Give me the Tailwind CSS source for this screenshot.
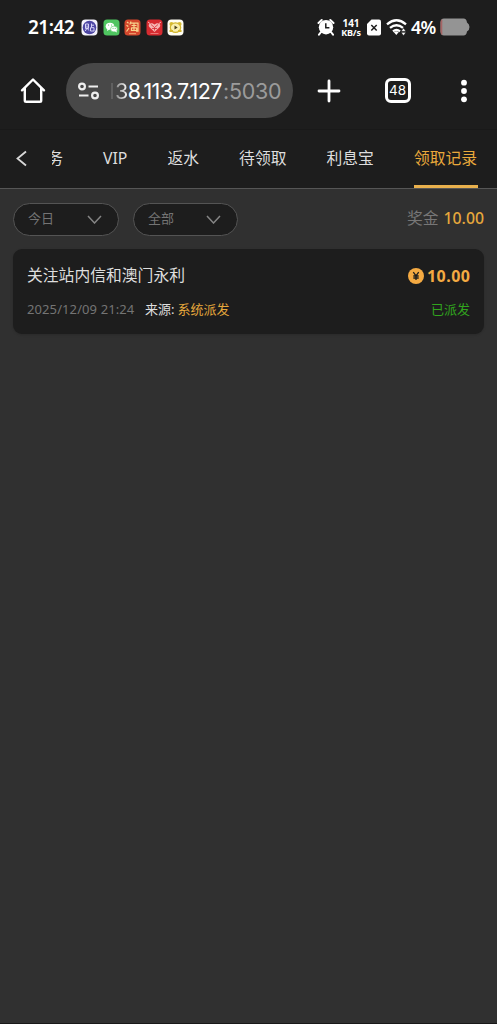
<!DOCTYPE html>
<html lang="zh-CN">
<head>
<meta charset="utf-8">
<meta name="viewport" content="width=device-width, initial-scale=1">
<title>领取记录</title>
<script src="https://cdn.jsdelivr.net/npm/@tailwindcss/browser@4"></script>
</head>
<body class="bg-[#303030] font-['Noto_Sans','Noto_Sans_CJK_SC',sans-serif] text-white">
<div class="flex h-[1024px] w-[497px] flex-col overflow-hidden border-b border-[#181818]">
  <!-- Status bar -->
  <div class="flex h-[54px] items-center bg-[#1d1d1d] pl-7 whitespace-nowrap">
    <span class="w-[53px] shrink-0 text-[19px] leading-none font-semibold tracking-[-0.5px]">21:42</span>
    <div class="flex w-[105px] shrink-0 gap-[4.500px]">
      <svg class="size-[17px] shrink-0" viewBox="0 0 17 17"><rect x=".5" y=".5" width="16" height="16" rx="4" fill="#f4f2fb"/><circle cx="8.5" cy="8.5" r="6.8" fill="#4d46a3"/><path d="M4.500 5h3v4.500h-3zM6 6.500v2.500L4.300 12m2.200-2.500 1.300 2M10.500 4.500v4M10.500 6.200h2.500M9.500 8.700h3.500v3.300H9.500z" fill="none" stroke="#d6d2f5" stroke-width="1"/></svg>
      <svg class="size-[17px] shrink-0" viewBox="0 0 17 17"><rect x=".5" y=".5" width="16" height="16" rx="3.500" fill="#4fc560"/><ellipse cx="7" cy="7.200" rx="4.300" ry="3.500" fill="#fff"/><path d="M4.500 9.500 4 12l2.500-1.500z" fill="#fff"/><ellipse cx="11" cy="10" rx="3.500" ry="2.900" fill="#fff" stroke="#4fc560" stroke-width=".6"/><path d="m12 12.500 1.800 1-.3-2z" fill="#fff"/><path d="M5.500 6h.1M8.500 6h.1M10 9.300h.1M12.200 9.300h.1" stroke="#4fc560" stroke-width="1.100" stroke-linecap="round"/></svg>
      <svg class="size-[17px] shrink-0" viewBox="0 0 17 17"><rect x=".5" y=".5" width="16" height="16" rx="3.500" fill="#d4472c"/><path d="m3 3 1.500 1.300M2.500 6.300 4.300 7.500M2.500 12.500 5 9M7 2.500 5.800 5.500M6.500 4.200h7.500v8h-2M7.500 6.500h5M10 4.500v6.500M7.200 8.800h5.600M7.500 8.800v2.700h5.200V9" fill="none" stroke="#f8d48c" stroke-width="1.200"/><path d="M5 14.700h7" stroke="#f0aa75" stroke-width="1"/></svg>
      <svg class="size-[17px] shrink-0" viewBox="0 0 17 17"><rect x=".5" y=".5" width="16" height="16" rx="3.500" fill="#d72b30"/><path d="M8.500 13 3.300 8c-2-3 1.700-5.500 5.200-2.500C12 2.500 15.700 5 13.700 8z" fill="#f6b5b2"/><path d="m5 5.500 3.500 3 3.500-3M6 9.500h5M8.500 8.500v3M2.500 3.300l1.800 1m10.200-1-1.800 1" fill="none" stroke="#d72b30" stroke-width=".8"/><path d="M2 3l2 1.500M15 3l-2 1.500" stroke="#f6b5b2" stroke-width="1"/><path d="M4.500 14.500h8" stroke="#f08a86" stroke-width=".8"/></svg>
      <svg class="size-[17px] shrink-0" viewBox="0 0 17 17"><rect x=".5" y=".5" width="16" height="16" rx="4" fill="#fffdf2"/><circle cx="4.500" cy="5" r="2.100" fill="#d6bb32"/><circle cx="12.500" cy="5" r="2.100" fill="#d6bb32"/><ellipse cx="8.500" cy="8.600" rx="5.200" ry="4.800" fill="#f9efac" stroke="#d2b52d" stroke-width="1.200"/><path d="M2.500 12h3.500m5 0h3.500" stroke="#d2b52d" stroke-width="2"/><path d="m7.500 6.500 3.200 2-3.200 2z" fill="#4c431d"/></svg>
    </div>
    <svg class="ml-[131px] h-[18px] w-[18px] shrink-0" viewBox="0 0 18 18"><circle cx="9" cy="9.200" r="7.200" fill="#fff"/><path d="M1.500 5 4.700 2M16.500 5 13.300 2M4 14l-2 2.600M14 14l2 2.600" stroke="#fff" stroke-width="2" stroke-linecap="round"/><path d="M8.800 5.300v4.400h3.600" fill="none" stroke="#1d1d1d" stroke-width="1.500"/></svg>
    <div class="ml-[5px] flex w-[22px] shrink-0 flex-col items-center font-bold"><span class="text-[10px] leading-[10px]">141</span><span class="text-[9px] leading-[9px] tracking-[-0.200px]">KB/s</span></div>
    <svg class="ml-[5px] h-[17px] w-[14px] shrink-0" viewBox="0 0 14 17"><path d="M4.500.5H12a2 2 0 0 1 2 2v12a2 2 0 0 1-2 2H2a2 2 0 0 1-2-2V5z" fill="#fff"/><path d="m4.300 6 5.400 5.500m0-5.500-5.400 5.500" stroke="#1d1d1d" stroke-width="1.500"/></svg>
    <svg class="ml-[5px] h-[18px] w-[21px] shrink-0" viewBox="0 0 21 18"><path d="M1 6.300Q10.500-1.800 20 6.300M4 9.900q6.500-5.400 13 0M7 13.300q3.500-2.800 7 0" fill="none" stroke="#fff" stroke-width="2.300"/><path d="m7.700 14 2.600 3 2.500-3q-2.500-1.500-5.100 0z" fill="#fff"/><path d="m15.300 13.300 2.200-3 2.200 3zm0 1.200 2.200 3 2.200-3z" fill="#fff" stroke="#1d1d1d" stroke-width=".3"/></svg>
    <span class="ml-[4px] w-[25px] shrink-0 text-[18px] leading-none font-semibold tracking-[-0.700px]">4%</span>
    <svg class="ml-[4px] h-[18px] w-[30px] shrink-0" viewBox="0 0 30 18"><path d="M4 .5h19.500q3 0 3.500 4Q29.500 6 29.500 9T27 13.500q-.5 4-3.500 4H4q-3.500 0-3.500-4v-9Q.5.500 4 .5z" fill="#949494"/><path d="M2.300 1Q.5 2 .5 4.500v9Q.5 16 2.300 17z" fill="#a66565"/></svg>
  </div>
  <!-- Browser toolbar -->
  <div class="flex h-[76px] items-center border-b border-[#191919] bg-[#1d1d1d] pb-[2px]">
    <svg class="ml-[20px] h-[27px] w-[26px] shrink-0" viewBox="0 0 26 27"><path d="M2 13.300 13 2.500l11 10.800M4.800 11v12.500q0 1.300 1.300 1.300h13.800q1.300 0 1.300-1.300V11" fill="none" stroke="#fff" stroke-width="2.400" stroke-linecap="round" stroke-linejoin="round"/></svg>
    <div class="ml-[20px] flex h-[55px] w-[227px] shrink-0 items-center rounded-full bg-[#484848] pl-[12px]">
      <svg class="h-[18px] w-[22px] shrink-0" viewBox="0 0 22 18" fill="none" stroke="#eee" stroke-width="2.200"><circle cx="4" cy="4.500" r="2.900"/><path d="M10.500 4.500H20M1 13.500h9.500"/><circle cx="17" cy="13.500" r="2.900"/></svg>
      <div class="ml-[11px] flex items-center font-['Inter'] text-[21.500px] leading-[28px] whitespace-nowrap">
        <span class="mr-[2px] h-[16px] w-[2px] bg-[#606060]"></span>
        <span class="w-[108px] tracking-[-0.650px]"><span class="bg-linear-to-r from-[#888] to-white bg-clip-text text-transparent">3</span>8.113.7.127</span><span class="tracking-[-0.300px] text-[#9b9b9b]">:5030</span>
      </div>
    </div>
    <svg class="ml-[23.500px] size-6 shrink-0" viewBox="0 0 24 24"><path d="M12 2v20M2 12h20" stroke="#fff" stroke-width="2.800" stroke-linecap="round"/></svg>
    <div class="ml-[44px] flex h-[25px] w-[26px] shrink-0 items-center justify-center rounded-[6px] border-3 border-white font-['Inter'] text-[13.500px] leading-none">48</div>
    <svg class="ml-[49px] h-6 w-2 shrink-0" viewBox="0 0 8 24" fill="#fff"><circle cx="4" cy="3.700" r="2.900"/><circle cx="4" cy="12" r="2.900"/><circle cx="4" cy="20.300" r="2.900"/></svg>
  </div>
  <!-- Section tabs -->
  <div class="flex h-[59px] shrink-0 border-b border-[#565656] bg-[#1d1d1d] pr-[20px] text-[15.800px] leading-[57px] whitespace-nowrap text-[#dedede]">
    <svg class="mt-[20px] ml-[15px] h-[17px] w-[13px] shrink-0" viewBox="0 0 13 17"><path d="M11 1.500 2.500 8.500l8.500 7" fill="none" stroke="#d8d8d8" stroke-width="1.800"/></svg>
    <div class="ml-[24px] flex w-[11px] shrink-0 justify-end overflow-hidden"><span>务</span></div>
    <span class="ml-[40px] w-[25px] shrink-0 text-[15.800px]">VIP</span>
    <span class="ml-[39.500px] shrink-0">返水</span>
    <span class="ml-[40px] shrink-0">待领取</span>
    <span class="ml-[40px] shrink-0">利息宝</span>
    <div class="ml-[40px] flex w-[64px] shrink-0 flex-col text-[#eaa93b]"><span class="h-[55px]">领取记录</span><span class="h-[3px] shrink-0 bg-[#e8b04d]"></span></div>
  </div>
  <!-- Filters and total -->
  <div class="flex h-[60px] shrink-0 items-center px-[13px] text-[13px]">
    <div class="flex h-[33px] w-[106px] items-center justify-between rounded-full border border-[#545454] bg-[#1d1d1d] pr-[16px] pl-[14px] text-[#747474]"><span>今日</span><svg class="h-[9px] w-[15px]" viewBox="0 0 15 9"><path d="m1 1 6.500 7L14 1" fill="none" stroke="#858585" stroke-width="1.500"/></svg></div>
    <div class="ml-[14px] flex h-[33px] w-[105px] items-center justify-between rounded-full border border-[#545454] bg-[#1d1d1d] pr-[16px] pl-[14px] text-[#747474]"><span>全部</span><svg class="h-[9px] w-[15px]" viewBox="0 0 15 9"><path d="m1 1 6.500 7L14 1" fill="none" stroke="#858585" stroke-width="1.500"/></svg></div>
    <div class="ml-auto flex items-center text-[15.800px]"><span class="text-[#777]">奖金</span><span class="ml-[5px] font-medium text-[#e6a83c]">10.00</span></div>
  </div>
  <!-- Record -->
  <div class="mx-[13px] flex h-[85px] shrink-0 flex-col rounded-[9px] bg-[#1d1d1d] px-[14px] pt-[15px] shadow-sm">
    <div class="flex h-6 items-center justify-between"><span class="text-[15.800px] text-[#dedede]">关注站内信和澳门永利</span>
      <div class="flex items-center gap-[3px] text-[#f4aa42]"><svg class="size-[16px]" viewBox="0 0 16 16"><circle cx="8" cy="8" r="8" fill="#f4aa42"/><path d="m5.300 4.200 2.700 3.600 2.700-3.600M8 7.800V12M5.300 8h5.400M5.300 10h5.400" fill="none" stroke="#1d1d1d" stroke-width="1.300"/></svg><span class="-mr-[0.500px] text-[16px] font-bold tracking-[0.500px]">10.00</span></div></div>
    <div class="mt-[12px] flex h-[20px] items-center text-[13px] whitespace-nowrap"><span class="w-[118px] tracking-[0.100px] text-[#747474]">2025/12/09 21:24</span><span class="text-[#dedede]">来源:</span><span class="ml-[3px] text-[#e6a83c]">系统派发</span><span class="ml-auto text-[#31a51d]">已派发</span></div>
  </div>
</div>
</body>
</html>
